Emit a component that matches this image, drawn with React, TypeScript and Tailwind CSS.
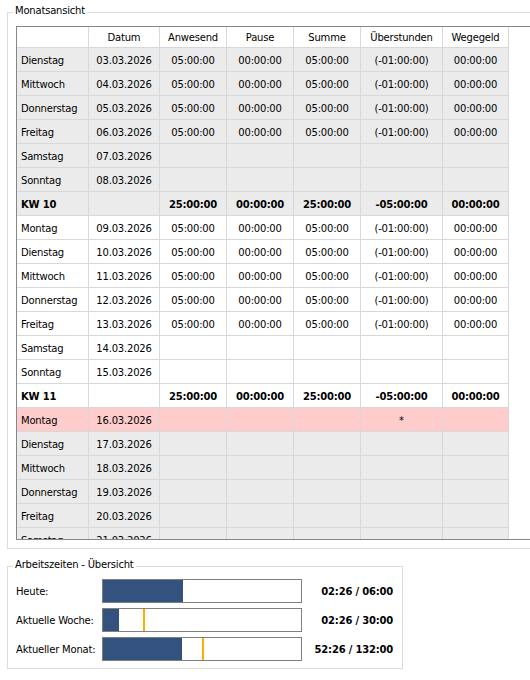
import React from "react";

type Row = {
  day: string;
  date?: string;
  vals?: string[];
  kind: "gray" | "white" | "pink";
  bold?: boolean;
};

const full = ["05:00:00", "00:00:00", "05:00:00", "(-01:00:00)", "00:00:00"];
const week = ["25:00:00", "00:00:00", "25:00:00", "-05:00:00", "00:00:00"];

const rows: Row[] = [
  { day: "Dienstag", date: "03.03.2026", vals: full, kind: "gray" },
  { day: "Mittwoch", date: "04.03.2026", vals: full, kind: "gray" },
  { day: "Donnerstag", date: "05.03.2026", vals: full, kind: "gray" },
  { day: "Freitag", date: "06.03.2026", vals: full, kind: "gray" },
  { day: "Samstag", date: "07.03.2026", kind: "gray" },
  { day: "Sonntag", date: "08.03.2026", kind: "gray" },
  { day: "KW 10", vals: week, kind: "gray", bold: true },
  { day: "Montag", date: "09.03.2026", vals: full, kind: "white" },
  { day: "Dienstag", date: "10.03.2026", vals: full, kind: "white" },
  { day: "Mittwoch", date: "11.03.2026", vals: full, kind: "white" },
  { day: "Donnerstag", date: "12.03.2026", vals: full, kind: "white" },
  { day: "Freitag", date: "13.03.2026", vals: full, kind: "white" },
  { day: "Samstag", date: "14.03.2026", kind: "white" },
  { day: "Sonntag", date: "15.03.2026", kind: "white" },
  { day: "KW 11", vals: week, kind: "white", bold: true },
  { day: "Montag", date: "16.03.2026", vals: ["", "", "", "*", ""], kind: "pink" },
  { day: "Dienstag", date: "17.03.2026", kind: "gray" },
  { day: "Mittwoch", date: "18.03.2026", kind: "gray" },
  { day: "Donnerstag", date: "19.03.2026", kind: "gray" },
  { day: "Freitag", date: "20.03.2026", kind: "gray" },
  { day: "Samstag", date: "21.03.2026", kind: "gray" },
];

const headers = ["", "Datum", "Anwesend", "Pause", "Summe", "Überstunden", "Wegegeld"];

const bgFor = {
  gray: "bg-[#ebebeb]",
  white: "bg-white",
  pink: "bg-[#ffcccc]",
};

const bars = [
  { label: "Heute:", fill: 40.5, mark: null as number | null, text: "02:26 / 06:00" },
  { label: "Aktuelle Woche:", fill: 8.1, mark: 20, text: "02:26 / 30:00" },
  { label: "Aktueller Monat:", fill: 39.7, mark: 50, text: "52:26 / 132:00" },
];

const App = () => {
  return (
    <div className="w-[530px] h-[680px] overflow-hidden bg-white text-black font-['DejaVu_Sans',sans-serif] text-[10px] tracking-[-0.2px] pl-[7px] pt-[12px]">
      {/* Monatsansicht */}
      <div className="relative w-[540px] h-[537px] border border-[#dcdcdc] pt-[13px] pl-[8px]">
        <span className="absolute -top-[9px] left-[5px] bg-white px-[2px] leading-[14px]">Monatsansicht</span>
        <div className="h-[514px] overflow-hidden border-l border-t border-b border-[#828790]">
          <div className="grid grid-cols-[72px_71px_67px_67px_67px_82px_66px]">
            {headers.map((h, i) => (
              <div key={i} className="h-[21px] pt-[1px] border-r border-b border-[#d8d8d8] flex items-center justify-center bg-white">
                {h}
              </div>
            ))}
            {rows.map((r, ri) => {
              const bg = bgFor[r.kind];
              const cells = [r.date ?? "", ...(r.vals ?? ["", "", "", "", ""])];
              return (
                <React.Fragment key={ri}>
                  <div className={`h-[24px] pt-[2px] border-r border-b border-[#d8d8d8] flex items-center pl-[4px] ${bg} ${r.bold ? "font-bold" : ""}`}>
                    {r.day}
                  </div>
                  {cells.map((c, ci) => (
                    <div
                      key={ci}
                      className={`h-[24px] pt-[2px] border-r border-b border-[#d8d8d8] flex items-center justify-center ${bg} ${r.bold ? "font-bold" : ""}`}
                    >
                      {c}
                    </div>
                  ))}
                </React.Fragment>
              );
            })}
          </div>
        </div>
      </div>

      {/* Arbeitszeiten - Übersicht */}
      <div className="relative mt-[17px] w-[396px] h-[103px] border border-[#dcdcdc] pt-[12px] pl-[8px] pr-[9px]">
        <span className="absolute -top-[9px] left-[5px] bg-white px-[2px] leading-[14px]">Arbeitszeiten - Übersicht</span>
        <div className="flex flex-col gap-[5px]">
          {bars.map((b) => (
            <div key={b.label} className="flex items-center h-[24px]">
              <div className="w-[86px] pt-[1px]">{b.label}</div>
              <div className="relative w-[200px] h-[24px] border border-[#7f7f7f] bg-white">
                <div className="h-full bg-[#33527e]" style={{ width: `${b.fill}%` }} />
                {b.mark !== null && (
                  <div className="absolute top-0 h-full w-[2px] bg-[#ffae00]" style={{ left: `${b.mark}%` }} />
                )}
              </div>
              <div className="flex-1 text-right font-bold pt-[1px]">{b.text}</div>
            </div>
          ))}
        </div>
      </div>
    </div>
  );
};

export default App;
